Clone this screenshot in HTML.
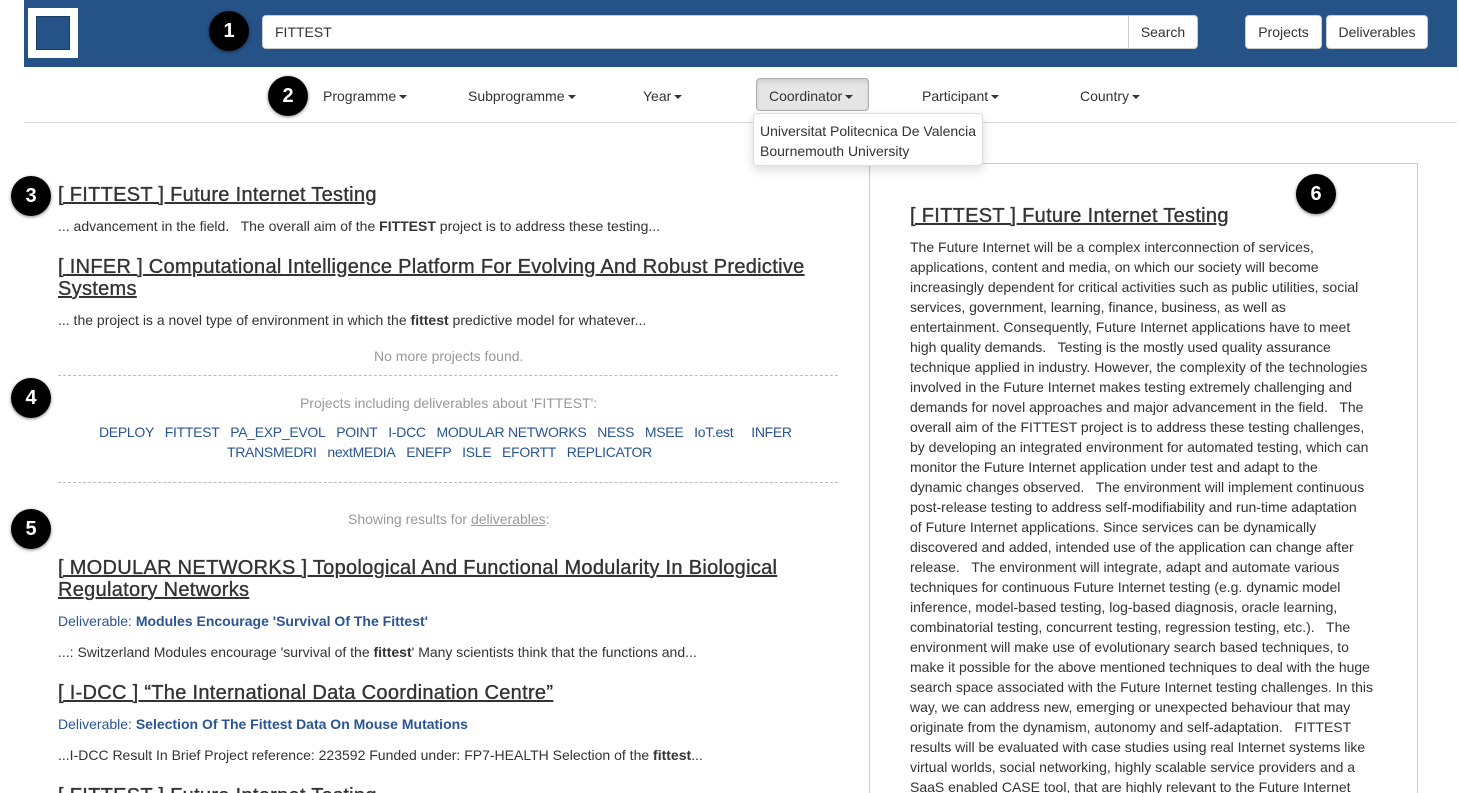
<!DOCTYPE html>
<html><head><meta charset="utf-8"><style>
*{margin:0;padding:0;box-sizing:border-box}
html,body{width:1459px;height:793px;overflow:hidden}
body{background:#fff;font-family:"Liberation Sans",Arial,sans-serif;color:#333;font-size:14px}
#w{position:relative;width:1459px;height:793px;overflow:hidden}
.a{position:absolute;white-space:nowrap}
.hdr{position:absolute;left:24px;top:0;width:1433px;height:67px;background:#255287}
.logo{position:absolute;left:28px;top:8px;width:50px;height:50px;background:#fff}
.logo div{position:absolute;left:8px;top:8px;width:34px;height:34px;background:#255287;border:1px solid #1a3e6a}
.inp{position:absolute;left:262px;top:15px;width:868px;height:34px;background:#fff;border:1px solid #ccc;border-radius:4px 0 0 4px;padding:8px 12px;font-size:14px;color:#333}
.btn{position:absolute;top:15px;height:34px;background:#fff;border:1px solid #ccc;border-radius:4px;font-size:14px;color:#333;text-align:center;line-height:32px}
.badge{position:absolute;width:40px;height:40px;border-radius:50%;background:#000;color:#fff;font-weight:bold;font-size:20px;text-align:center;line-height:40px;box-shadow:0 1px 3px rgba(0,0,0,.5)}
.nav{position:absolute;top:88px;font-size:14px;color:#333}
.car{display:inline-block;width:0;height:0;border-left:4px solid transparent;border-right:4px solid transparent;border-top:4px solid #333;vertical-align:middle;margin-left:3px}
h3{position:absolute;font-size:20px;font-weight:normal;text-decoration:underline;color:#333;line-height:22px;white-space:nowrap;letter-spacing:0.3px;-webkit-text-stroke:0.35px #333}
.g{color:#999}
.lk{color:#2a5592}
.dash{position:absolute;left:58px;width:780px;border-top:1px dashed #bbb}
.r div{height:20px;line-height:20px;white-space:nowrap}
.pl{letter-spacing:-0.3px}
</style></head><body><div id="w">
<div class="hdr"></div>
<div class="logo"><div></div></div>
<div class="badge" style="left:209px;top:11px">1</div>
<div class="inp">FITTEST</div>
<div class="btn" style="left:1128px;width:70px;border-radius:0 4px 4px 0">Search</div>
<div class="btn" style="left:1245px;width:77px">Projects</div>
<div class="btn" style="left:1326px;width:102px">Deliverables</div>

<div class="badge" style="left:268px;top:76px">2</div>
<div class="nav" style="left:323px">Programme<span class="car"></span></div>
<div class="nav" style="left:468px">Subprogramme<span class="car"></span></div>
<div class="nav" style="left:643px">Year<span class="car"></span></div>
<div style="position:absolute;left:756px;top:78px;width:113px;height:33px;background:#e6e6e6;border:1px solid #adadad;border-radius:4px;box-shadow:inset 0 3px 5px rgba(0,0,0,.1)"></div>
<div class="nav" style="left:769px">Coordinator<span class="car"></span></div>
<div class="nav" style="left:922px">Participant<span class="car"></span></div>
<div class="nav" style="left:1080px">Country<span class="car"></span></div>
<div style="position:absolute;left:24px;top:122px;width:1433px;border-top:1px solid #ddd"></div>

<div class="badge" style="left:11px;top:176px">3</div>
<h3 style="left:58px;top:184px">[ FITTEST ] Future Internet Testing</h3>
<div class="a" style="left:58px;top:218px">... advancement in the field.&nbsp;&nbsp; The overall aim of the <b>FITTEST</b> project is to address these testing...</div>
<h3 style="left:58px;top:256px">[ INFER ] Computational Intelligence Platform For Evolving And Robust Predictive<br>Systems</h3>
<div class="a" style="left:58px;top:312px">... the project is a novel type of environment in which the <b>fittest</b> predictive model for whatever...</div>
<div class="a g" style="left:374px;top:348px">No more projects found.</div>
<div class="dash" style="top:375px"></div>
<div class="badge" style="left:11px;top:378px">4</div>
<div class="a g" style="left:300px;top:395px">Projects including deliverables about 'FITTEST':</div>
<div class="a lk pl" style="left:99px;top:424px">DEPLOY&nbsp;&nbsp;&nbsp;FITTEST&nbsp;&nbsp;&nbsp;PA_EXP_EVOL&nbsp;&nbsp;&nbsp;POINT&nbsp;&nbsp;&nbsp;I-DCC&nbsp;&nbsp;&nbsp;MODULAR NETWORKS&nbsp;&nbsp;&nbsp;NESS&nbsp;&nbsp;&nbsp;MSEE&nbsp;&nbsp;&nbsp;IoT.est&nbsp;&nbsp;&nbsp;&nbsp;&nbsp;INFER</div>
<div class="a lk pl" style="left:227px;top:444px">TRANSMEDRI&nbsp;&nbsp;&nbsp;nextMEDIA&nbsp;&nbsp;&nbsp;ENEFP&nbsp;&nbsp;&nbsp;ISLE&nbsp;&nbsp;&nbsp;EFORTT&nbsp;&nbsp;&nbsp;REPLICATOR</div>
<div class="dash" style="top:482px"></div>
<div class="badge" style="left:11px;top:509px">5</div>
<div class="a g" style="left:348px;top:511px">Showing results for <span style="text-decoration:underline">deliverables</span>:</div>
<h3 style="left:58px;top:557px">[ MODULAR NETWORKS ] Topological And Functional Modularity In Biological<br>Regulatory Networks</h3>
<div class="a lk" style="left:58px;top:613px">Deliverable: <b>Modules Encourage 'Survival Of The Fittest'</b></div>
<div class="a" style="left:58px;top:644px">...: Switzerland Modules encourage 'survival of the <b>fittest</b>' Many scientists think that the functions and...</div>
<h3 style="left:58px;top:682px">[ I-DCC ] “The International Data Coordination Centre”</h3>
<div class="a lk" style="left:58px;top:716px">Deliverable: <b>Selection Of The Fittest Data On Mouse Mutations</b></div>
<div class="a" style="left:58px;top:747px">...I-DCC Result In Brief Project reference: 223592 Funded under: FP7-HEALTH Selection of the <b>fittest</b>...</div>
<h3 style="left:58px;top:785px;height:8px;overflow:hidden">[ FITTEST ] Future Internet Testing</h3>

<div style="position:absolute;left:869px;top:163px;width:549px;height:630px;border:1px solid #ccc;border-bottom:none;background:#fff"></div>
<div class="badge" style="left:1296px;top:174px">6</div>
<h3 style="left:910px;top:205px">[ FITTEST ] Future Internet Testing</h3>
<div class="a r" style="left:910px;top:237px;height:556px;overflow:hidden">
<div>The Future Internet will be a complex interconnection of services,</div>
<div>applications, content and media, on which our society will become</div>
<div>increasingly dependent for critical activities such as public utilities, social</div>
<div>services, government, learning, finance, business, as well as</div>
<div>entertainment. Consequently, Future Internet applications have to meet</div>
<div>high quality demands.&nbsp;&nbsp; Testing is the mostly used quality assurance</div>
<div>technique applied in industry. However, the complexity of the technologies</div>
<div>involved in the Future Internet makes testing extremely challenging and</div>
<div>demands for novel approaches and major advancement in the field.&nbsp;&nbsp; The</div>
<div>overall aim of the FITTEST project is to address these testing challenges,</div>
<div>by developing an integrated environment for automated testing, which can</div>
<div>monitor the Future Internet application under test and adapt to the</div>
<div>dynamic changes observed.&nbsp;&nbsp; The environment will implement continuous</div>
<div>post-release testing to address self-modifiability and run-time adaptation</div>
<div>of Future Internet applications. Since services can be dynamically</div>
<div>discovered and added, intended use of the application can change after</div>
<div>release.&nbsp;&nbsp; The environment will integrate, adapt and automate various</div>
<div>techniques for continuous Future Internet testing (e.g. dynamic model</div>
<div>inference, model-based testing, log-based diagnosis, oracle learning,</div>
<div>combinatorial testing, concurrent testing, regression testing, etc.).&nbsp;&nbsp; The</div>
<div>environment will make use of evolutionary search based techniques, to</div>
<div>make it possible for the above mentioned techniques to deal with the huge</div>
<div>search space associated with the Future Internet testing challenges. In this</div>
<div>way, we can address new, emerging or unexpected behaviour that may</div>
<div>originate from the dynamism, autonomy and self-adaptation.&nbsp;&nbsp; FITTEST</div>
<div>results will be evaluated with case studies using real Internet systems like</div>
<div>virtual worlds, social networking, highly scalable service providers and a</div>
<div>SaaS enabled CASE tool, that are highly relevant to the Future Internet</div>
</div>

<div style="position:absolute;left:753px;top:113px;width:230px;height:53px;background:#fff;border:1px solid #ddd;border-radius:4px;box-shadow:0 4px 10px rgba(0,0,0,.15)"></div>
<div class="a" style="left:760px;top:123px">Universitat Politecnica De Valencia</div>
<div class="a" style="left:760px;top:143px">Bournemouth University</div>
</div></body></html>
